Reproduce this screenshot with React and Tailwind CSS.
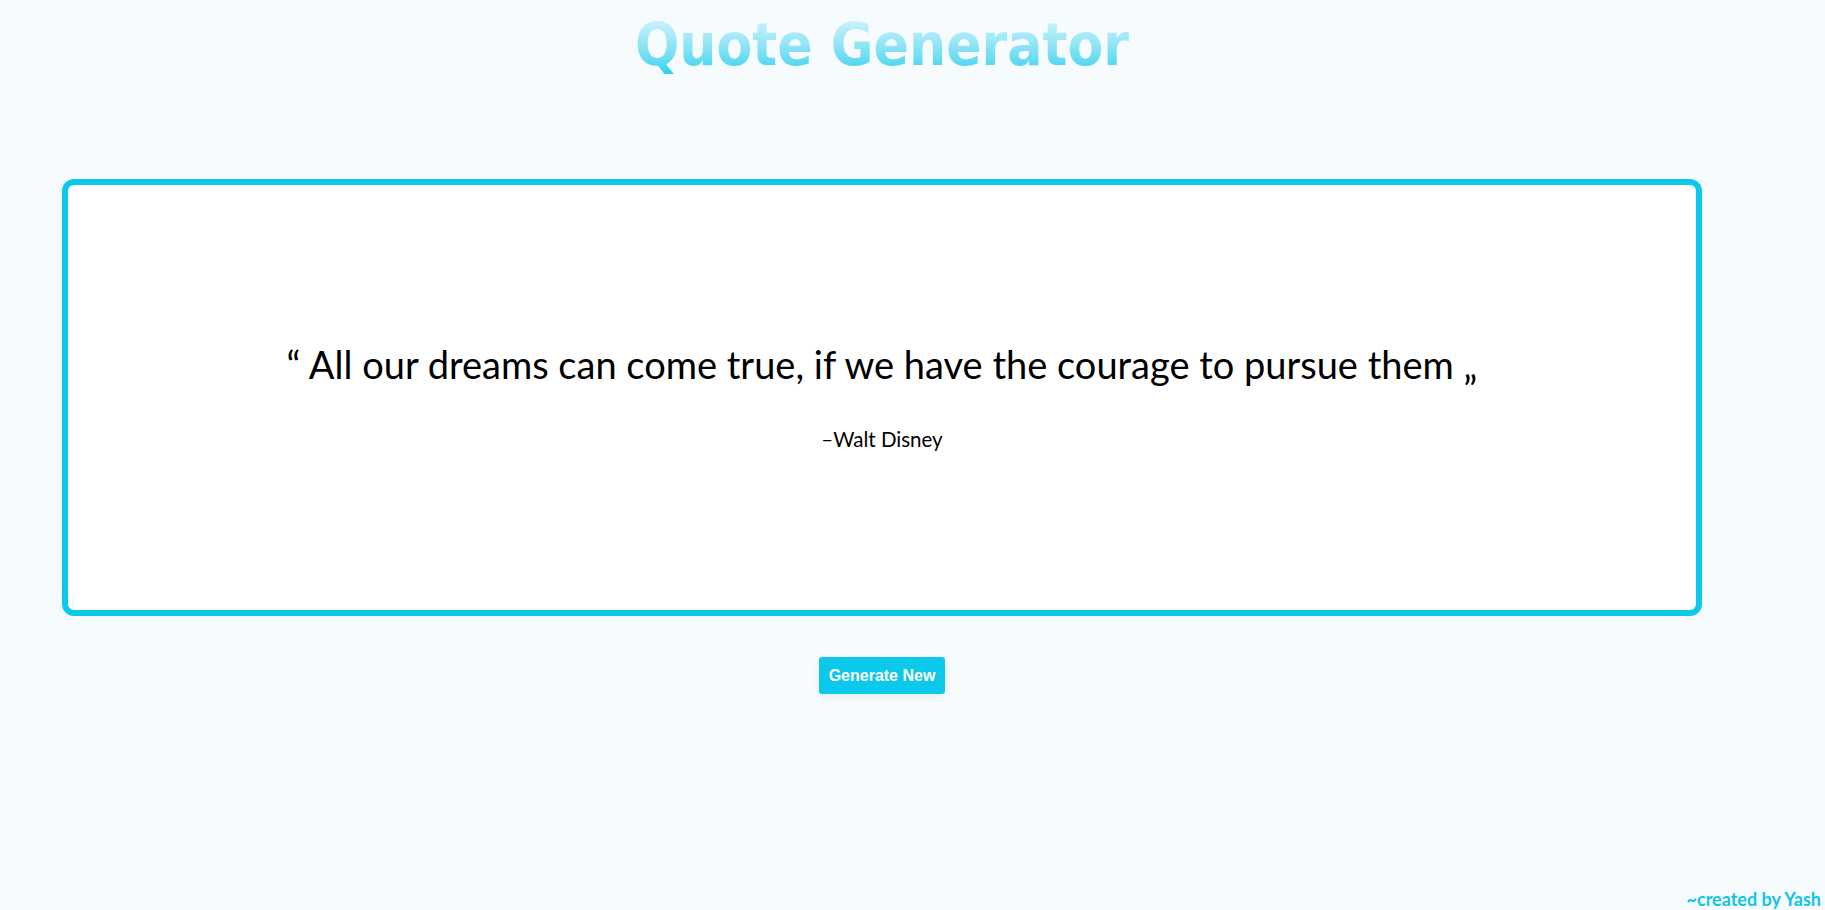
export default function App() {
  return (
    <div className="min-h-[910px] w-full bg-[#f6fbfe] relative overflow-hidden">
      <div className="flex flex-col">
        <div className="ml-[62px] w-[1640px] pt-[16px] flex justify-center">
          <h1
            className="inline-block text-[58px] leading-none font-bold bg-gradient-to-b from-[#d2f5fc] to-[#25d2ee] bg-clip-text text-transparent"
            style={{ fontFamily: '"DejaVu Sans Condensed", "DejaVu Sans", sans-serif' }}
          >
            Quote Generator
          </h1>
        </div>
        <div className="ml-[62px] mt-[105px] w-[1640px] h-[437px] rounded-[12px] border-[6px] border-[#0cc9eb] bg-white flex flex-col items-center justify-center">
          <div className="flex flex-col items-center" style={{ fontFamily: 'Lato, "Open Sans", sans-serif' }}>
            <p className="text-[38px] leading-none text-black">“ All our dreams can come true, if we have the courage to pursue them „</p>
            <p className="mt-[46px] text-[20.5px] leading-none text-black">–Walt Disney</p>
          </div>
        </div>
        <div className="ml-[62px] w-[1640px] flex justify-center mt-[41px]">
          <button
            className="w-[126px] h-[37px] rounded-[3px] bg-[#0cc9eb] text-white text-[16px] font-bold shadow-[0_3px_8px_rgba(0,0,0,0.06)]"
            style={{ fontFamily: '"Liberation Sans", Arial, sans-serif' }}
          >
            Generate New
          </button>
        </div>
      </div>
      <div
        className="absolute right-[4px] bottom-[2px] text-[18px] font-bold text-[#12c4e4] leading-none"
        style={{ fontFamily: 'Lato, "Open Sans", sans-serif' }}
      >
        ~created by Yash
      </div>
    </div>
  );
}
